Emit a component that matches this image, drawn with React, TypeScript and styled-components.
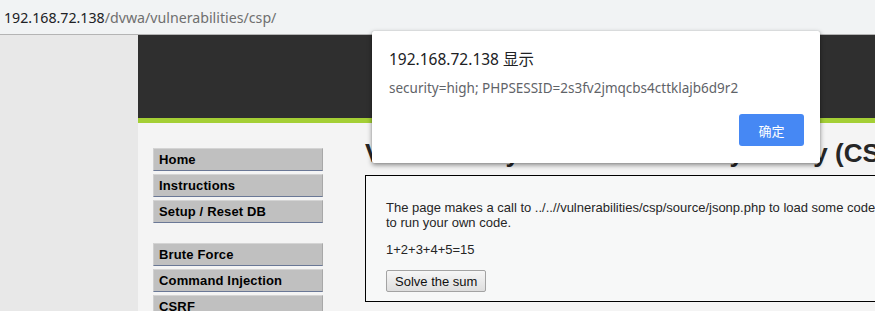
import React from "react";
import styled, { createGlobalStyle } from "styled-components";

const Global = createGlobalStyle`
  html, body { margin: 0; padding: 0; }
  body { width: 875px; height: 311px; overflow: hidden; background: #e8e8e8; font-family: "Liberation Sans", Arial, sans-serif; }
`;

const AddressBar = styled.div`
  height: 34px;
  background: #f1f3f4;
  border-bottom: 1px solid #b4b4b4;
  display: flex;
  align-items: center;
  padding-left: 4px;
  font-family: "Noto Sans", "Open Sans", sans-serif;
  font-size: 14.2px;
  white-space: nowrap;
  box-sizing: content-box;
`;

const Host = styled.span`
  color: #202124;
`;

const PathPart = styled.span`
  color: #6f6f6f;
`;

const Page = styled.div`
  display: flex;
  width: 1100px;
`;

const Gutter = styled.div`
  width: 138px;
  flex: none;
  background: #e8e8e8;
`;

const Container = styled.div`
  flex: 1;
  display: flex;
  flex-direction: column;
  background: #f4f4f4;
`;

const Header = styled.div`
  flex: none;
  height: 83px;
  background: #2f2f2f;
  border-bottom: 5px solid #a4cf35;
`;

const Body = styled.div`
  display: flex;
  flex: 1;
`;

const Menu = styled.div`
  width: 170px;
  padding: 25px 0 0 15px;
  flex: none;
  display: flex;
  flex-direction: column;
`;

const MenuGroup = styled.div`
  display: flex;
  flex-direction: column;
  gap: 3px;
  margin-bottom: 20px;
`;

const MenuItem = styled.div`
  height: 21px;
  box-sizing: content-box;
  background: #c0c0c0;
  border-top: 1px solid #d4d4d4;
  border-left: 1px solid #d0d0d0;
  border-right: 1px solid #a8a8a8;
  border-bottom: 1px solid #6a7896;
  padding-left: 5px;
  display: flex;
  align-items: center;
  font-weight: bold;
  font-size: 13px;
  color: #000;
  letter-spacing: 0.15px;
`;

const Main = styled.div`
  padding: 15px 0 0 42px;
  flex: 1;
`;

const Title = styled.h1`
  margin: 0 0 7px 0;
  font-size: 26px;
  line-height: 30px;
  font-weight: bold;
  color: #262626;
  white-space: nowrap;
`;

const CodeArea = styled.div`
  width: 560px;
  border: 1px solid #000;
  background: #f7f8f8;
  padding: 24px 20px 9px 20px;
  font-size: 13px;
  line-height: 15px;
  color: #262626;
`;

const Para = styled.p`
  margin: 0 0 12px 0;
  white-space: nowrap;
`;

const SumButton = styled.button`
  font-family: "Liberation Sans", Arial, sans-serif;
  font-size: 13px;
  height: 22px;
  padding: 0 8px;
  border: 1px solid #a3a3a3;
  border-radius: 2px;
  background: linear-gradient(#f6f6f6, #dedede);
  color: #111;
  margin-top: 1px;
`;

const Dialog = styled.div`
  position: absolute;
  left: 372px;
  top: 31px;
  width: 448px;
  height: 132px;
  box-sizing: border-box;
  background: #fff;
  border-radius: 2px;
  box-shadow: 0 2px 5px rgba(0, 0, 0, 0.45), 0 0 1px rgba(0, 0, 0, 0.3);
  padding: 18px 16px 0 17px;
  font-family: "Noto Sans", "Noto Sans CJK SC", sans-serif;
`;

const DialogTitle = styled.div`
  font-size: 15.5px;
  line-height: 20px;
  color: #202124;
`;

const DialogMsg = styled.div`
  margin-top: 10px;
  font-size: 13.5px;
  line-height: 18px;
  color: #5f6368;
`;

const DialogFooter = styled.div`
  display: flex;
  justify-content: flex-end;
  margin-top: 17px;
`;

const OkButton = styled.div`
  width: 65px;
  height: 32px;
  border-radius: 3px;
  background: #4688f4;
  color: #fff;
  font-size: 13px;
  font-family: "Noto Sans CJK SC", sans-serif;
  display: flex;
  align-items: center;
  justify-content: center;
`;

export default function App() {
  return (
    <>
      <Global />
      <AddressBar>
        <Host>192.168.72.138</Host>
        <PathPart>/dvwa/vulnerabilities/csp/</PathPart>
      </AddressBar>
      <Page>
        <Gutter />
        <Container>
          <Header />
          <Body>
            <Menu>
              <MenuGroup>
                <MenuItem>Home</MenuItem>
                <MenuItem>Instructions</MenuItem>
                <MenuItem>Setup / Reset DB</MenuItem>
              </MenuGroup>
              <MenuGroup>
                <MenuItem>Brute Force</MenuItem>
                <MenuItem>Command Injection</MenuItem>
                <MenuItem>CSRF</MenuItem>
              </MenuGroup>
            </Menu>
            <Main>
              <Title>Vulnerability: Content Security Policy (CSP) Bypass</Title>
              <CodeArea>
                <Para>
                  The page makes a call to ../..//vulnerabilities/csp/source/jsonp.php to load some code. Modify that page
                  <br />
                  to run your own code.
                </Para>
                <Para>1+2+3+4+5=15</Para>
                <SumButton>Solve the sum</SumButton>
              </CodeArea>
            </Main>
          </Body>
        </Container>
      </Page>
      <Dialog>
        <DialogTitle>192.168.72.138 显示</DialogTitle>
        <DialogMsg>security=high; PHPSESSID=2s3fv2jmqcbs4cttklajb6d9r2</DialogMsg>
        <DialogFooter>
          <OkButton>确定</OkButton>
        </DialogFooter>
      </Dialog>
    </>
  );
}
